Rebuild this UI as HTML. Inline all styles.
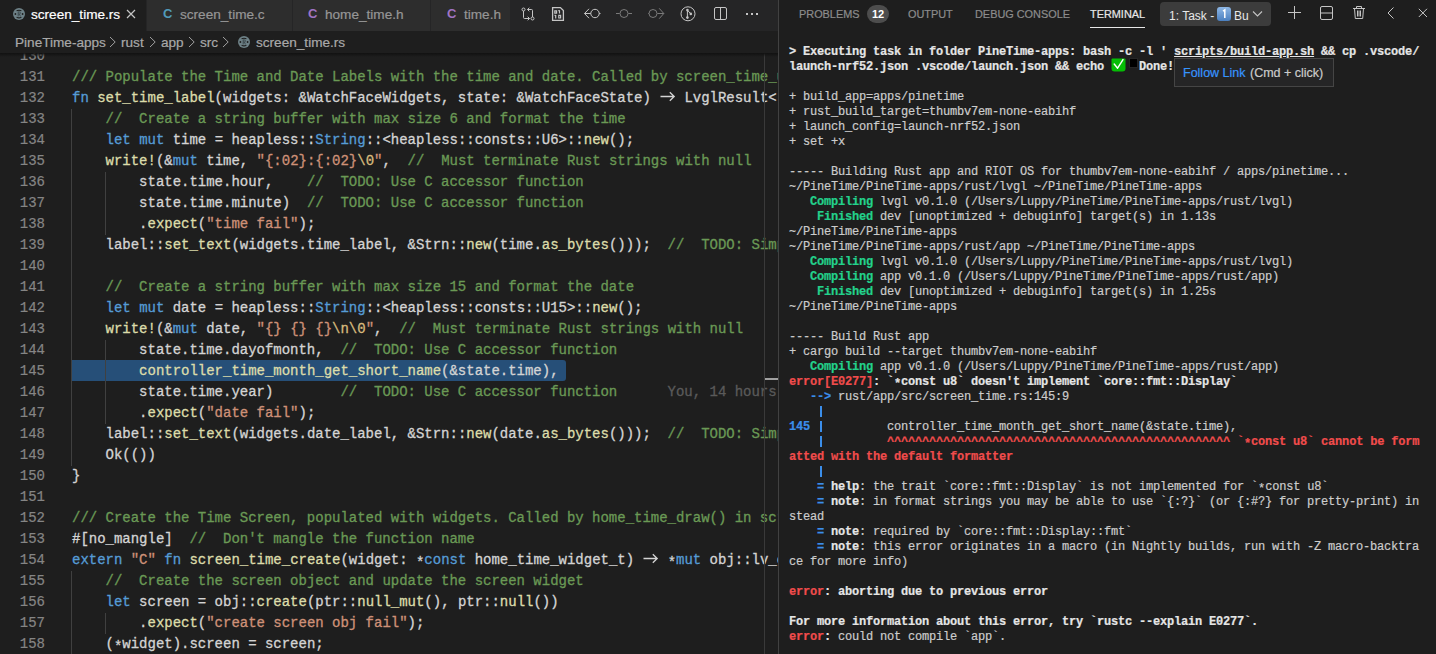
<!DOCTYPE html>
<html><head><meta charset="utf-8">
<style>
*{box-sizing:border-box}
html,body{margin:0;padding:0}
body{width:1436px;height:654px;overflow:hidden;background:#1e1e1e;position:relative;font-family:"Liberation Sans",sans-serif;}
.abs{position:absolute}
/* tabs */
#tabbar{position:absolute;left:0;top:0;width:778px;height:31px;background:#252526}
.tab{position:absolute;top:0;height:31px;background:#2d2d2d;border-right:1px solid #252526}
.tab.active{background:#1e1e1e}
.tab .lbl{position:absolute;top:7px;font-size:13.6px;color:#969696;white-space:nowrap;line-height:16px}
.tab.active .lbl{color:#ffffff}
.tab .lbl,#crumbs span,.ptab,#tip span{-webkit-text-stroke:0.2px currentColor}
.cic{position:absolute;top:6px;font-size:13px;font-weight:bold;line-height:16px}
#crumbs{position:absolute;left:0;top:31px;width:778px;height:22px;background:#1e1e1e;font-size:13.6px;color:#a9a9a9;white-space:nowrap}
#crumbs span{position:absolute;top:4px;line-height:16px}
#editor{position:absolute;left:0;top:53px;width:778px;height:601px;overflow:hidden;background:#1e1e1e}
#shadow{position:absolute;left:0;top:53px;width:778px;height:4px;background:linear-gradient(#111111,rgba(17,17,17,0))}
#ed-in{position:absolute;left:0;top:-53px;width:778px;height:654px}
.ln{position:absolute;left:0;width:45px;text-align:right;font-family:"Liberation Mono",monospace;font-size:14px;-webkit-text-stroke:0.2px currentColor;line-height:21px;height:21px;color:#858585;white-space:pre}
.cl{position:absolute;left:72px;letter-spacing:-0.013px;font-family:"Liberation Mono",monospace;font-size:14px;-webkit-text-stroke:0.3px currentColor;line-height:21px;height:21px;color:#d4d4d4;white-space:pre}
.k{color:#569cd6}.f{color:#dcdcaa}.c{color:#6a9955}.s{color:#ce9178}.e{color:#d7ba7d}.b{color:#5a5a5a}
.arr{display:inline-block;width:16.8px;height:21px;vertical-align:top;position:relative}
.arr svg{position:absolute;left:0;top:0}
.ast{position:relative;top:3px}
.tast{position:relative;top:2px}
.bar{display:inline-block;width:7px;height:15px;vertical-align:top;position:relative}
.bar:after{content:"";position:absolute;left:3px;top:0.5px;width:1.6px;height:11.5px;background:#3b8eea}
.guide{position:absolute;width:1px;background:#404040}
#sel{position:absolute;left:71px;top:360px;width:495px;height:21px;background:#264f78;border-radius:0 3px 3px 0}
#ruler{position:absolute;left:764px;top:53px;width:14px;height:601px;border-left:1px solid #3a3a3a}
#divider{position:absolute;left:778px;top:0;width:1px;height:654px;background:#414141}
/* panel */
#panel{position:absolute;left:779px;top:0;width:657px;height:654px;background:#1e1e1e;overflow:hidden}
.ptab{position:absolute;top:7px;font-size:10.9px;line-height:14px;color:#8c8c8c;white-space:nowrap;letter-spacing:0}
.tl{position:absolute;left:10px;font-family:"Liberation Mono",monospace;font-size:12px;letter-spacing:-0.2px;-webkit-text-stroke:0.2px currentColor;line-height:15px;height:15px;color:#cccccc;white-space:pre}
.bw{font-weight:bold;color:#e5e5e5}
.bwl{font-weight:bold;color:#e5e5e5;text-decoration:underline;text-underline-offset:1px}
.rb{font-weight:bold;color:#f14c4c}
.gb{font-weight:bold;color:#23d18b}
.ub{font-weight:bold;color:#3b8eea}
.emo{display:inline-block;width:28px;height:15px;position:relative;vertical-align:top}
.chk{position:absolute;left:0;top:-2px;width:15px;height:14px}
.blk{position:absolute;left:19px;top:-1px;width:7px;height:8px;background:#000;box-shadow:0 0 0 1px #262626}
#tip{position:absolute;left:395px;top:58px;width:160px;height:29px;background:#252526;border:1px solid #454545;font-size:12.5px;line-height:16px;white-space:nowrap}
#tip span{position:absolute;top:6px}
svg{display:block}
</style></head><body>

<div id="tabbar">
  <div class="tab active" style="left:0;width:147px">
    <svg class="abs" style="left:12px;top:7px" width="14" height="14" viewBox="0 0 14 14"><circle cx="7" cy="7" r="6" fill="#6d8086"/><path d="M4.6 3.8Q7 2.6 9.4 3.8M4.6 10.3Q7 11.4 9.4 10.3" stroke="#1e1e1e" stroke-width="1.1" fill="none"/><circle cx="3.4" cy="7" r="0.9" fill="#1e1e1e"/><circle cx="10.6" cy="7" r="0.9" fill="#1e1e1e"/><path d="M6.2 4.8V9.4M6.2 4.9H7.4Q8.4 4.9 8.4 6Q8.4 7 7.4 7H6.2M7.4 7L8.4 9.4" stroke="#3a4549" stroke-width="0.9" fill="none"/></svg>
    <div class="lbl" style="left:31px">screen_time.rs</div>
    <svg class="abs" style="left:126px;top:9px" width="10" height="10" viewBox="0 0 10 10"><path d="M1 1L9 9M9 1L1 9" stroke="#c5c5c5" stroke-width="1.2"/></svg>
  </div>
  <div class="tab" style="left:147px;width:146px">
    <div class="cic" style="left:16px;color:#519aba">C</div>
    <div class="lbl" style="left:33px">screen_time.c</div>
  </div>
  <div class="tab" style="left:293px;width:138px">
    <div class="cic" style="left:15px;color:#a074c4">C</div>
    <div class="lbl" style="left:32px">home_time.h</div>
  </div>
  <div class="tab" style="left:431px;width:80px">
    <div class="cic" style="left:16px;color:#a074c4">C</div>
    <div class="lbl" style="left:33px">time.h</div>
  </div>
  <!-- toolbar icons -->
  <svg class="abs" style="left:510px;top:0" width="268" height="31" viewBox="510 0 268 31" fill="none" stroke-width="1">
    <g stroke="#c5c5c5">
      <circle cx="523.5" cy="9.5" r="1.5"/><circle cx="532.5" cy="18.5" r="1.5"/>
      <path d="M523.5 11V17.5Q523.5 18.5 524.5 18.5H529.5M527.7 16.7L529.5 18.5L527.7 20.3"/>
      <path d="M532.5 17V10.5Q532.5 9.5 531.5 9.5H527.5M529.3 7.7L527.5 9.5L529.3 11.3"/>
      <path d="M552.6 7.6H560.4L563.4 10.6V20.4H552.6Z" stroke-width="1.3"/>
      <path d="M554.8 10.8h1.8v2.4h-1.8zM559.5 10.2v3.4M558.3 10.6h1.2M555.7 15v3.4M554.5 15.4h1.2M558.8 15.4h1.8v2.6h-1.8z" stroke-width="1.2"/>
      <path d="M589 8.8L584.5 13.5L589 18.2M584.5 13.5H590.8M599.2 13.5H600.5"/>
      <circle cx="595" cy="13.5" r="4.2"/>
      <circle cx="688" cy="13.8" r="7"/>
      <path d="M687.4 10.1V17.8M687.4 10.1L690.7 13.8"/>
      <rect x="714.5" y="7.5" width="12" height="12" rx="1.5"/>
      <path d="M720.5 7.5V19.5"/>
    </g>
    <g fill="#c5c5c5" stroke="none">
      <circle cx="687.4" cy="10.1" r="1.3"/><circle cx="687.4" cy="17.6" r="1.3"/><circle cx="690.8" cy="13.9" r="1.3"/>
      <rect x="746" y="13" width="2" height="2"/><rect x="751" y="13" width="2" height="2"/><rect x="756" y="13" width="2" height="2"/>
    </g>
    <g stroke="#7a7a7a">
      <path d="M616 13.5H619.7M628.3 13.5H632"/>
      <circle cx="624" cy="13.5" r="4"/>
      <path d="M648 13.5H648.7M657.3 13.5H663.8M659.2 8.3L663.8 13.5L659.2 18.7"/>
      <circle cx="653" cy="13.5" r="4"/>
    </g>
  </svg>
</div>

<div id="crumbs">
  <span style="left:15px">PineTime-apps</span>
  <svg class="abs" style="left:109px;top:5px" width="8" height="12" viewBox="0 0 8 12"><path d="M1 1L6.2 6L1 11" stroke="#a0a0a0" stroke-width="1" fill="none"/></svg>
  <span style="left:121px">rust</span>
  <svg class="abs" style="left:149px;top:5px" width="8" height="12" viewBox="0 0 8 12"><path d="M1 1L6.2 6L1 11" stroke="#a0a0a0" stroke-width="1" fill="none"/></svg>
  <span style="left:161px">app</span>
  <svg class="abs" style="left:188px;top:5px" width="8" height="12" viewBox="0 0 8 12"><path d="M1 1L6.2 6L1 11" stroke="#a0a0a0" stroke-width="1" fill="none"/></svg>
  <span style="left:200px">src</span>
  <svg class="abs" style="left:222px;top:5px" width="8" height="12" viewBox="0 0 8 12"><path d="M1 1L6.2 6L1 11" stroke="#a0a0a0" stroke-width="1" fill="none"/></svg>
  <svg class="abs" style="left:237px;top:4px" width="14" height="14" viewBox="0 0 14 14"><circle cx="7" cy="7" r="6" fill="#6d8086"/><path d="M4.6 3.8Q7 2.6 9.4 3.8M4.6 10.3Q7 11.4 9.4 10.3" stroke="#1e1e1e" stroke-width="1.1" fill="none"/><circle cx="3.4" cy="7" r="0.9" fill="#1e1e1e"/><circle cx="10.6" cy="7" r="0.9" fill="#1e1e1e"/><path d="M6.2 4.8V9.4M6.2 4.9H7.4Q8.4 4.9 8.4 6Q8.4 7 7.4 7H6.2M7.4 7L8.4 9.4" stroke="#3a4549" stroke-width="0.9" fill="none"/></svg>
  <span style="left:256px">screen_time.rs</span>
</div>

<div id="editor"><div id="ed-in">
  <div id="sel"></div>
  <div class="guide" style="left:71px;top:109px;height:357px"></div>
  <div class="guide" style="left:105px;top:172px;height:63px"></div>
  <div class="guide" style="left:105px;top:340px;height:84px"></div>
  <div class="guide" style="left:71px;top:571px;height:84px"></div>
  <div class="guide" style="left:105px;top:613px;height:21px"></div>
<div class="ln" style="top:46px">130</div>
<div class="ln" style="top:67px">131</div>
<div class="ln" style="top:88px">132</div>
<div class="ln" style="top:109px">133</div>
<div class="ln" style="top:130px">134</div>
<div class="ln" style="top:151px">135</div>
<div class="ln" style="top:172px">136</div>
<div class="ln" style="top:193px">137</div>
<div class="ln" style="top:214px">138</div>
<div class="ln" style="top:235px">139</div>
<div class="ln" style="top:256px">140</div>
<div class="ln" style="top:277px">141</div>
<div class="ln" style="top:298px">142</div>
<div class="ln" style="top:319px">143</div>
<div class="ln" style="top:340px">144</div>
<div class="ln" style="top:361px">145</div>
<div class="ln" style="top:382px">146</div>
<div class="ln" style="top:403px">147</div>
<div class="ln" style="top:424px">148</div>
<div class="ln" style="top:445px">149</div>
<div class="ln" style="top:466px">150</div>
<div class="ln" style="top:487px">151</div>
<div class="ln" style="top:508px">152</div>
<div class="ln" style="top:529px">153</div>
<div class="ln" style="top:550px">154</div>
<div class="ln" style="top:571px">155</div>
<div class="ln" style="top:592px">156</div>
<div class="ln" style="top:613px">157</div>
<div class="ln" style="top:634px">158</div>
<div class="ln" style="top:655px">159</div>
<div class="cl" style="top:46px"></div>
<div class="cl" style="top:67px"><span class="c">/// Populate the Time and Date Labels with the time and date. Called by screen_time_update()</span></div>
<div class="cl" style="top:88px"><span class="k">fn</span> <span class="f">set_time_label</span>(widgets: &amp;WatchFaceWidgets, state: &amp;WatchFaceState) <span class="arr"><svg width="17" height="21" viewBox="0 0 17 21"><path d="M1.5 8.5H15.2M10.8 4.2L15.2 8.5L10.8 12.8" stroke="#d4d4d4" stroke-width="1.3" fill="none"/></svg></span> LvglResult&lt;()&gt; {</div>
<div class="cl" style="top:109px">    <span class="c">//  Create a string buffer with max size 6 and format the time</span></div>
<div class="cl" style="top:130px">    <span class="k">let</span> <span class="k">mut</span> time = heapless::<span class="k">String</span>::&lt;heapless::consts::U6&gt;::<span class="f">new</span>();</div>
<div class="cl" style="top:151px">    <span class="f">write!</span>(&amp;<span class="k">mut</span> time, <span class="s">"{:02}:{:02}</span><span class="e">\0</span><span class="s">"</span>,  <span class="c">//  Must terminate Rust strings with null</span></div>
<div class="cl" style="top:172px">        state.time.hour,    <span class="c">//  TODO: Use C accessor function</span></div>
<div class="cl" style="top:193px">        state.time.minute)  <span class="c">//  TODO: Use C accessor function</span></div>
<div class="cl" style="top:214px">        .<span class="f">expect</span>(<span class="s">"time fail"</span>);</div>
<div class="cl" style="top:235px">    label::<span class="f">set_text</span>(widgets.time_label, &amp;Strn::<span class="f">new</span>(time.<span class="f">as_bytes</span>()));  <span class="c">//  TODO: Simplify</span></div>
<div class="cl" style="top:256px"></div>
<div class="cl" style="top:277px">    <span class="c">//  Create a string buffer with max size 15 and format the date</span></div>
<div class="cl" style="top:298px">    <span class="k">let</span> <span class="k">mut</span> date = heapless::<span class="k">String</span>::&lt;heapless::consts::U15&gt;::<span class="f">new</span>();</div>
<div class="cl" style="top:319px">    <span class="f">write!</span>(&amp;<span class="k">mut</span> date, <span class="s">"{} {} {}</span><span class="e">\n\0</span><span class="s">"</span>,  <span class="c">//  Must terminate Rust strings with null</span></div>
<div class="cl" style="top:340px">        state.time.dayofmonth,  <span class="c">//  TODO: Use C accessor function</span></div>
<div class="cl" style="top:361px">        <span class="f">controller_time_month_get_short_name</span>(&amp;state.time),</div>
<div class="cl" style="top:382px">        state.time.year)        <span class="c">//  TODO: Use C accessor function</span><span class="b">      You, 14 hours ago</span></div>
<div class="cl" style="top:403px">        .<span class="f">expect</span>(<span class="s">"date fail"</span>);</div>
<div class="cl" style="top:424px">    label::<span class="f">set_text</span>(widgets.date_label, &amp;Strn::<span class="f">new</span>(date.<span class="f">as_bytes</span>()));  <span class="c">//  TODO: Simplify</span></div>
<div class="cl" style="top:445px">    Ok(())</div>
<div class="cl" style="top:466px">}</div>
<div class="cl" style="top:487px"></div>
<div class="cl" style="top:508px"><span class="c">/// Create the Time Screen, populated with widgets. Called by home_time_draw() in screen_time.c</span></div>
<div class="cl" style="top:529px">#[no_mangle]  <span class="c">//  Don't mangle the function name</span></div>
<div class="cl" style="top:550px"><span class="k">extern</span> <span class="s">"C"</span> <span class="k">fn</span> <span class="f">screen_time_create</span>(widget: <span class="ast">*</span><span class="k">const</span> home_time_widget_t) <span class="arr"><svg width="17" height="21" viewBox="0 0 17 21"><path d="M1.5 8.5H15.2M10.8 4.2L15.2 8.5L10.8 12.8" stroke="#d4d4d4" stroke-width="1.3" fill="none"/></svg></span> <span class="ast">*</span><span class="k">mut</span> obj::lv_obj_t {</div>
<div class="cl" style="top:571px">    <span class="c">//  Create the screen object and update the screen widget</span></div>
<div class="cl" style="top:592px">    <span class="k">let</span> screen = obj::<span class="f">create</span>(ptr::<span class="f">null_mut</span>(), ptr::<span class="f">null</span>())</div>
<div class="cl" style="top:613px">        .<span class="f">expect</span>(<span class="s">"create screen obj fail"</span>);</div>
<div class="cl" style="top:634px">    (<span class="ast">*</span>widget).screen = screen;</div>
<div class="cl" style="top:655px"></div>
</div></div>
<div id="ruler"><div class="abs" style="left:0px;top:325px;width:13px;height:2px;background:#a0a0a0"></div></div>
<div id="shadow"></div>
<div id="divider"></div>

<div id="panel">
  <div class="ptab" style="left:20px">PROBLEMS</div>
  <div class="abs" style="left:88px;top:5px;width:22px;height:18px;border-radius:9px;background:#4d4d4d;color:#fff;font-size:11px;line-height:18px;text-align:center;font-weight:bold">12</div>
  <div class="ptab" style="left:129px">OUTPUT</div>
  <div class="ptab" style="left:196px">DEBUG CONSOLE</div>
  <div class="ptab" style="left:311px;color:#e7e7e7">TERMINAL</div>
  <div class="abs" style="left:311px;top:27px;width:55px;height:1px;background:#e7e7e7"></div>
  <div class="abs" style="left:381px;top:2px;width:111px;height:24px;border-radius:4px;background:#3c3c3c"></div>
  <div class="abs" style="left:390px;top:8px;font-size:12px;line-height:16px;color:#e8e8e8;white-space:nowrap">1: Task -</div>
  <svg class="abs" style="left:438px;top:7px" width="14" height="14" viewBox="0 0 14 14"><defs><linearGradient id="g1" x1="0" y1="0" x2="0" y2="1"><stop offset="0" stop-color="#8fb8e6"/><stop offset="1" stop-color="#4a7fbf"/></linearGradient></defs><rect x="0" y="0" width="14" height="14" rx="3" fill="url(#g1)"/><path d="M6 4.2L7.8 3V11" stroke="#fff" stroke-width="1.5" fill="none"/></svg>
  <div class="abs" style="left:455px;top:8px;font-size:12px;line-height:16px;color:#e8e8e8;white-space:nowrap">Bu</div>
  <svg class="abs" style="left:473px;top:10px" width="11" height="8" viewBox="0 0 11 8"><path d="M1 1.5L5.5 6L10 1.5" stroke="#c5c5c5" stroke-width="1.1" fill="none"/></svg>
  <svg class="abs" style="left:508px;top:5px" width="15" height="15" viewBox="0 0 15 15"><path d="M7.5 1V14M1 7.5H14" stroke="#c5c5c5" stroke-width="1"/></svg>
  <svg class="abs" style="left:540px;top:5px" width="15" height="16" viewBox="0 0 15 16" fill="none" stroke="#c5c5c5" stroke-width="1"><rect x="1.5" y="1.5" width="12" height="13" rx="1.5"/><path d="M1.5 8H13.5"/></svg>
  <svg class="abs" style="left:573px;top:5px" width="14" height="15" viewBox="0 0 14 15" fill="none" stroke="#c5c5c5" stroke-width="1"><path d="M1 3.5H13M4.5 3.5V1.5H9.5V3.5M2.5 3.5L3.3 13.5H10.7L11.5 3.5M5.5 5.5V11.5M7 5.5V11.5M8.5 5.5V11.5"/></svg>
  <svg class="abs" style="left:607px;top:6px" width="10" height="14" viewBox="0 0 10 14"><path d="M7.5 1.5L2 7L7.5 12.5" stroke="#c5c5c5" stroke-width="1" fill="none"/></svg>
  <svg class="abs" style="left:639px;top:8px" width="11" height="11" viewBox="0 0 11 11"><path d="M0.8 0.8L9 9M9 0.8L0.8 9" stroke="#c5c5c5" stroke-width="1"/></svg>
<div class="tl" style="top:45px"><span class="bw">&gt; Executing task in folder PineTime-apps: bash -c -l ' </span><span class="bwl">scripts/build-app.sh</span><span class="bw"> &amp;&amp; cp .vscode/</span></div>
<div class="tl" style="top:60px"><span class="bw">launch-nrf52.json .vscode/launch.json &amp;&amp; echo </span><span class="emo"><span class="chk"><svg width="15" height="14" viewBox="0 0 15 14"><path d="M1.5 0.5H13.5Q14.5 0.5 14.5 1.5V10.5Q14.5 13.5 11.5 13.5H3.5Q0.5 13.5 0.5 10.5V1.5Q0.5 0.5 1.5 0.5Z" fill="#05bd05"/><path d="M3.2 6L6.6 10.2L12 1.6" stroke="#fff" stroke-width="1.4" fill="none" stroke-linecap="round" stroke-linejoin="round"/></svg></span><span class="blk"></span></span><span class="bw">Done!</span></div>
<div class="tl" style="top:75px"></div>
<div class="tl" style="top:90px">+ build_app=apps/pinetime</div>
<div class="tl" style="top:105px">+ rust_build_target=thumbv7em-none-eabihf</div>
<div class="tl" style="top:120px">+ launch_config=launch-nrf52.json</div>
<div class="tl" style="top:135px">+ set +x</div>
<div class="tl" style="top:150px"></div>
<div class="tl" style="top:165px">----- Building Rust app and RIOT OS for thumbv7em-none-eabihf / apps/pinetime...</div>
<div class="tl" style="top:180px">~/PineTime/PineTime-apps/rust/lvgl ~/PineTime/PineTime-apps</div>
<div class="tl" style="top:195px"><span class="gb">   Compiling</span> lvgl v0.1.0 (/Users/Luppy/PineTime/PineTime-apps/rust/lvgl)</div>
<div class="tl" style="top:210px"><span class="gb">    Finished</span> dev [unoptimized + debuginfo] target(s) in 1.13s</div>
<div class="tl" style="top:225px">~/PineTime/PineTime-apps</div>
<div class="tl" style="top:240px">~/PineTime/PineTime-apps/rust/app ~/PineTime/PineTime-apps</div>
<div class="tl" style="top:255px"><span class="gb">   Compiling</span> lvgl v0.1.0 (/Users/Luppy/PineTime/PineTime-apps/rust/lvgl)</div>
<div class="tl" style="top:270px"><span class="gb">   Compiling</span> app v0.1.0 (/Users/Luppy/PineTime/PineTime-apps/rust/app)</div>
<div class="tl" style="top:285px"><span class="gb">    Finished</span> dev [unoptimized + debuginfo] target(s) in 1.25s</div>
<div class="tl" style="top:300px">~/PineTime/PineTime-apps</div>
<div class="tl" style="top:315px"></div>
<div class="tl" style="top:330px">----- Build Rust app</div>
<div class="tl" style="top:345px">+ cargo build --target thumbv7em-none-eabihf</div>
<div class="tl" style="top:360px"><span class="gb">   Compiling</span> app v0.1.0 (/Users/Luppy/PineTime/PineTime-apps/rust/app)</div>
<div class="tl" style="top:375px"><span class="rb">error[E0277]</span><span class="bw">: `<span class="tast">*</span>const u8` doesn't implement `core::fmt::Display`</span></div>
<div class="tl" style="top:390px"><span class="ub">   --&gt;</span> rust/app/src/screen_time.rs:145:9</div>
<div class="tl" style="top:405px"><span class="ub">    <span class="bar"></span></span></div>
<div class="tl" style="top:420px"><span class="ub">145 <span class="bar"></span></span>         controller_time_month_get_short_name(&amp;state.time),</div>
<div class="tl" style="top:435px"><span class="ub">    <span class="bar"></span></span>         <span class="rb">^^^^^^^^^^^^^^^^^^^^^^^^^^^^^^^^^^^^^^^^^^^^^^^^^ `<span class="tast">*</span>const u8` cannot be form</span></div>
<div class="tl" style="top:450px"><span class="rb">atted with the default formatter</span></div>
<div class="tl" style="top:465px"><span class="ub">    <span class="bar"></span></span></div>
<div class="tl" style="top:480px"><span class="ub">    = </span><span class="bw">help</span>: the trait `core::fmt::Display` is not implemented for `<span class="tast">*</span>const u8`</div>
<div class="tl" style="top:495px"><span class="ub">    = </span><span class="bw">note</span>: in format strings you may be able to use `{:?}` (or {:#?} for pretty-print) in</div>
<div class="tl" style="top:510px">stead</div>
<div class="tl" style="top:525px"><span class="ub">    = </span><span class="bw">note</span>: required by `core::fmt::Display::fmt`</div>
<div class="tl" style="top:540px"><span class="ub">    = </span><span class="bw">note</span>: this error originates in a macro (in Nightly builds, run with -Z macro-backtra</div>
<div class="tl" style="top:555px">ce for more info)</div>
<div class="tl" style="top:570px"></div>
<div class="tl" style="top:585px"><span class="rb">error</span><span class="bw">: aborting due to previous error</span></div>
<div class="tl" style="top:600px"></div>
<div class="tl" style="top:615px"><span class="bw">For more information about this error, try `rustc --explain E0277`.</span></div>
<div class="tl" style="top:630px"><span class="rb">error</span><span class="bw">:</span> could not compile `app`.</div>
  <div id="tip"><span style="left:8px;color:#3794ff">Follow Link</span><span style="left:75px;color:#cccccc">(Cmd + click)</span></div>
</div>
</body></html>
